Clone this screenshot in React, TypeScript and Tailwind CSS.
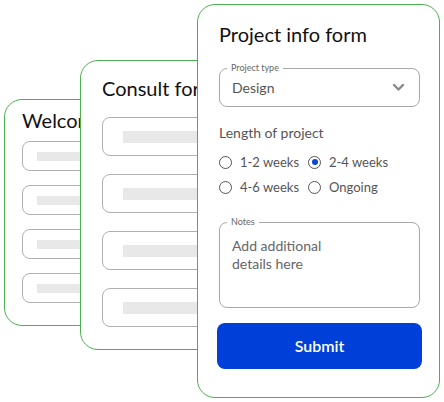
import React from 'react';

const font = { fontFamily: 'Lato, "Noto Sans", sans-serif' };

function GhostInput({ tall }: { tall?: boolean }) {
  return (
    <div
      className={
        tall
          ? 'h-[39px] rounded-lg border border-[#b0b0b0] flex items-center pl-5'
          : 'h-[30px] rounded-lg border border-[#b0b0b0] flex items-center pl-[14px]'
      }
    >
      <div className={tall ? 'h-[12px] w-full bg-[#e8e8e8]' : 'h-[9px] w-full bg-[#e8e8e8]'} />
    </div>
  );
}

function Radio({ label, checked }: { label: string; checked?: boolean }) {
  return (
    <label className="flex items-center gap-[8px] text-[13px] leading-[16px] text-[#555]">
      <span className="w-[13px] h-[13px] rounded-full border border-[#555] flex items-center justify-center">
        {checked && <span className="w-[6px] h-[6px] rounded-full bg-[#0a45d6]" />}
      </span>
      {label}
    </label>
  );
}

export default function App() {
  return (
    <div className="relative w-[444px] h-[402px] bg-white overflow-hidden" style={font}>
      {/* back card */}
      <div className="absolute left-[4px] top-[99px] w-[170px] h-[227px] rounded-[18px] border border-[#4caf50] bg-white pl-[17px] pt-[7px]">
        <div className="text-[20px] text-[#111] leading-[26px]">Welcome</div>
        <div className="mt-[8px] flex flex-col gap-[14px]">
          <GhostInput />
          <GhostInput />
          <GhostInput />
          <GhostInput />
        </div>
      </div>

      {/* middle card */}
      <div className="absolute left-[80px] top-[60px] w-[170px] h-[290px] rounded-[18px] border border-[#4caf50] bg-white pl-[21px] pt-[14px]">
        <div className="text-[20px] text-[#111] leading-[26px] whitespace-nowrap">Consult form</div>
        <div className="mt-[16px] flex flex-col gap-[18px]">
          <GhostInput tall />
          <GhostInput tall />
          <GhostInput tall />
          <GhostInput tall />
        </div>
      </div>

      {/* front card */}
      <div className="absolute left-[197px] top-[4px] w-[243px] h-[394px] rounded-[18px] border border-[#4caf50] bg-white pl-[21px] pr-[19px] pt-[16px]">
        <div className="text-[20px] text-[#111] leading-[26px]">Project info form</div>

        <div className="relative mt-[21px] h-[39px] rounded-lg border border-[#a8a8a8] flex items-center justify-between pl-[12px] pr-[14px]">
          <span className="absolute -top-[7px] left-[7px] bg-white px-[4px] text-[9px] text-[#666] leading-[12px]">
            Project type
          </span>
          <span className="text-[14px] text-[#555]">Design</span>
          <svg width="13" height="9" viewBox="0 0 13 9" fill="none">
            <path d="M2 2 L6.5 6.5 L11 2" stroke="#888" strokeWidth="2.4" strokeLinecap="round" strokeLinejoin="round" />
          </svg>
        </div>

        <div className="mt-[17px] text-[14px] text-[#555] leading-[18px]">Length of project</div>
        <div className="mt-[12px] grid grid-cols-[89px_1fr] gap-y-[9px]">
          <Radio label="1-2 weeks" />
          <Radio label="2-4 weeks" checked />
          <Radio label="4-6 weeks" />
          <Radio label="Ongoing" />
        </div>

        <div className="relative mt-[27px] h-[86px] rounded-lg border border-[#a8a8a8] pl-[12px] pt-[14px]">
          <span className="absolute -top-[7px] left-[7px] bg-white px-[4px] text-[9px] text-[#666] leading-[12px]">
            Notes
          </span>
          <div className="text-[14px] text-[#666] leading-[18px]">
            Add additional
            <br />
            details here
          </div>
        </div>

        <button className="mt-[15px] -ml-[2px] w-[205px] h-[46px] rounded-lg bg-[#0040d8] text-white text-[16px] font-semibold">
          Submit
        </button>
      </div>
    </div>
  );
}
